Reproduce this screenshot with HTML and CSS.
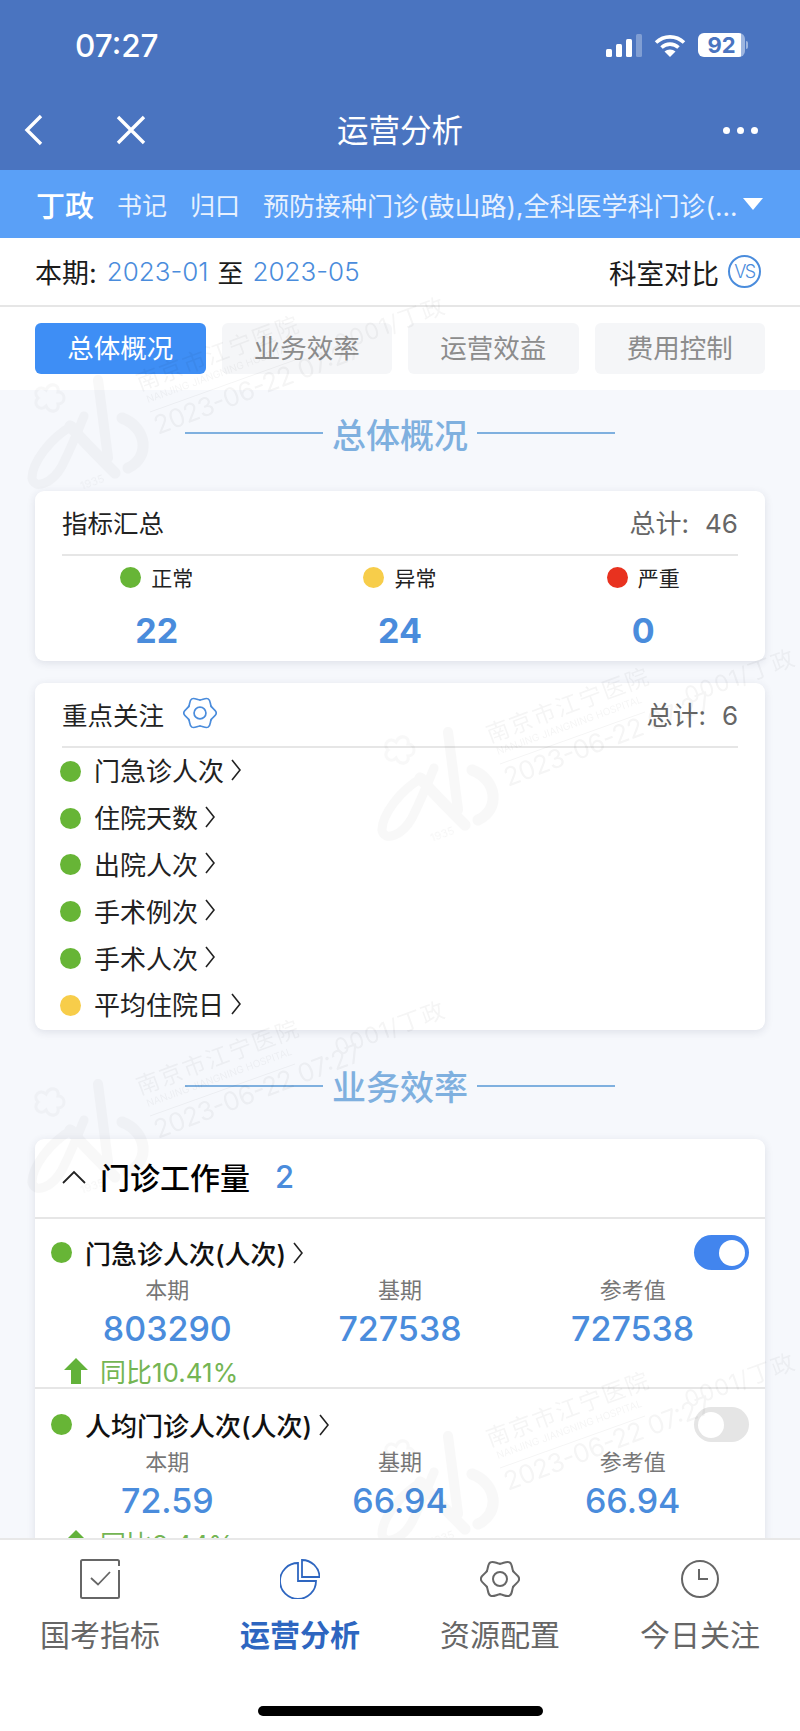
FILE: index.html
```html
<!DOCTYPE html>
<html>

    <head>
        <meta charset="utf-8">
        <link rel="stylesheet" href="styles.css">
    </head>

    <body>
        <!-- shared shapes -->
        <svg class="defs" width="0" height="0">
            <symbol id="gear" viewBox="0 0 40 40">
                <g fill="none" stroke="currentColor" stroke-width="2" stroke-linecap="round">
                    <path id="lobe" d="M33.25 12.35C34.75 14.95 39.2 16.5 39.2 20C39.2 23.5 34.75 25.05 33.25 27.65"/>
                    <use href="#lobe" transform="rotate(60 20 20)"/>
                    <use href="#lobe" transform="rotate(120 20 20)"/>
                    <use href="#lobe" transform="rotate(180 20 20)"/>
                    <use href="#lobe" transform="rotate(240 20 20)"/>
                    <use href="#lobe" transform="rotate(300 20 20)"/>
                    <circle cx="20" cy="20" r="7"/>
                </g>
            </symbol>
            <symbol id="chev" viewBox="0 0 10 22">
                <polyline points="1,1 9,11 1,21" fill="none" stroke="currentColor" stroke-width="1.6"/>
            </symbol>
            <symbol id="up" viewBox="0 0 24 26">
                <polygon points="12,0 24,12 17,12 17,26 7,26 7,12 0,12" fill="currentColor"/>
            </symbol>
            <symbol id="logo" viewBox="0 0 160 130">
                <g fill="none" stroke="#000" stroke-linecap="round">
                    <path d="M88 12L98 90" stroke-width="10"/>
                    <path d="M60 58C75 75 90 90 105 105" stroke-width="11"/>
                    <path d="M62 58C40 70 22 95 22 110C24 122 42 116 52 98C58 86 66 68 74 48" stroke-width="9"/>
                    <path d="M112 50C138 60 140 90 118 100" stroke-width="11"/>
                    <path d="M36 22C40 14 50 16 48 24C56 24 56 36 48 36C50 44 40 46 36 38C30 44 22 36 28 30C22 24 30 16 36 22Z" stroke-width="3"/>
                </g>
            </symbol>
        </svg>

        <div class="page">
            <header class="top">
                <div class="status">
                    <span class="time">07:27</span>
                    <div class="status-icons">
                        <svg class="signal" width="36" height="23" viewBox="0 0 36 23">
                            <rect x="0" y="15" width="6" height="8" rx="1.5" fill="#fff"/>
                            <rect x="10" y="10" width="6" height="13" rx="1.5" fill="#fff"/>
                            <rect x="20" y="5" width="6" height="18" rx="1.5" fill="#fff"/>
                            <rect x="30" y="0" width="6" height="23" rx="1.5" fill="#fff" opacity=".3"/>
                        </svg>
                        <svg class="wifi" width="32" height="23" viewBox="0 0 32 23">
                            <path d="M2 8.5C10 1 22 1 30 8.5M7.5 13.5C12.5 9 19.5 9 24.5 13.5" fill="none" stroke="#fff" stroke-width="3.6"/>
                            <path d="M16 23L10.5 17.5C13.5 14.8 18.5 14.8 21.5 17.5Z" fill="#fff"/>
                        </svg>
                        <div class="battery"><span class="battery-num">92</span></div>
                        <span class="battery-nub"></span>
                    </div>
                </div>
                <nav class="nav">
                    <svg class="nav-back" width="20" height="32" viewBox="0 0 20 32">
                        <polyline points="17,2 3,16 17,30" fill="none" stroke="#fff" stroke-width="3.4"/>
                    </svg>
                    <svg class="nav-close" width="30" height="30" viewBox="0 0 30 30">
                        <path d="M2 2L28 28M28 2L2 28" fill="none" stroke="#fff" stroke-width="3.4"/>
                    </svg>
                    <span class="nav-title">运营分析</span>
                    <div class="nav-more"><i></i><i></i><i></i></div>
                </nav>
            </header>

            <div class="user">
                <b class="user-name">丁政</b>
                <span class="user-role">书记</span>
                <span class="user-role">归口</span>
                <span class="user-dept">预防接种门诊(鼓山路),全科医学科门诊(...</span>
                <span class="user-caret"></span>
            </div>

            <div class="period">
                <span class="period-label">本期:</span>
                <span class="period-date">2023-01</span>
                <span>至</span>
                <span class="period-date">2023-05</span>
                <span class="period-cmp">科室对比</span>
                <span class="vs">VS</span>
            </div>

            <main class="main">
                <div class="tabs">
                    <div class="tab tab-on">总体概况</div>
                    <div class="tab">业务效率</div>
                    <div class="tab">运营效益</div>
                    <div class="tab">费用控制</div>
                </div>

                <div class="heading">
                    <i></i><span>总体概况</span><i></i>
                </div>

                <section class="card">
                    <div class="card-head">
                        <span class="card-title">指标汇总</span>
                        <span class="card-total">总计:<span class="total-num">46</span></span>
                    </div>
                    <div class="stats">
                        <div class="stat">
                            <div class="stat-label"><i class="dot green"></i>正常</div>
                            <div class="stat-num">22</div>
                        </div>
                        <div class="stat">
                            <div class="stat-label"><i class="dot yellow"></i>异常</div>
                            <div class="stat-num">24</div>
                        </div>
                        <div class="stat">
                            <div class="stat-label"><i class="dot red"></i>严重</div>
                            <div class="stat-num">0</div>
                        </div>
                    </div>
                </section>

                <section class="card card-focus">
                    <div class="card-head">
                        <span class="card-title">重点关注</span>
                        <svg class="focus-gear" width="34" height="34"><use href="#gear"/></svg>
                        <span class="card-total">总计:<span class="total-num">6</span></span>
                    </div>
                    <ul class="focus">
                        <li><i class="dot green"></i>门急诊人次<svg class="chev" width="10" height="22"><use href="#chev"/></svg></li>
                        <li><i class="dot green"></i>住院天数<svg class="chev" width="10" height="22"><use href="#chev"/></svg></li>
                        <li><i class="dot green"></i>出院人次<svg class="chev" width="10" height="22"><use href="#chev"/></svg></li>
                        <li><i class="dot green"></i>手术例次<svg class="chev" width="10" height="22"><use href="#chev"/></svg></li>
                        <li><i class="dot green"></i>手术人次<svg class="chev" width="10" height="22"><use href="#chev"/></svg></li>
                        <li><i class="dot yellow"></i>平均住院日<svg class="chev" width="10" height="22"><use href="#chev"/></svg></li>
                    </ul>
                </section>

                <div class="heading heading-next">
                    <i></i><span>业务效率</span><i></i>
                </div>

                <section class="card">
                    <div class="group-head">
                        <svg width="24" height="14" viewBox="0 0 24 14">
                            <polyline points="1,13 12,2 23,13" fill="none" stroke="#222" stroke-width="1.8"/>
                        </svg>
                        <span class="group-title">门诊工作量</span>
                        <span class="group-count">2</span>
                    </div>

                    <div class="item">
                        <div class="item-head">
                            <i class="dot green"></i>
                            <span class="item-name">门急诊人次(人次)</span>
                            <svg class="chev" width="10" height="22"><use href="#chev"/></svg>
                            <span class="switch switch-on"></span>
                        </div>
                        <div class="cols">
                            <div class="col"><div class="col-label">本期</div><div class="col-num">803290</div></div>
                            <div class="col"><div class="col-label">基期</div><div class="col-num">727538</div></div>
                            <div class="col"><div class="col-label">参考值</div><div class="col-num">727538</div></div>
                        </div>
                        <div class="yoy">
                            <svg width="24" height="26"><use href="#up"/></svg>
                            <span>同比10.41%</span>
                        </div>
                    </div>

                    <div class="item item-next">
                        <div class="item-head">
                            <i class="dot green"></i>
                            <span class="item-name">人均门诊人次(人次)</span>
                            <svg class="chev" width="10" height="22"><use href="#chev"/></svg>
                            <span class="switch"></span>
                        </div>
                        <div class="cols">
                            <div class="col"><div class="col-label">本期</div><div class="col-num">72.59</div></div>
                            <div class="col"><div class="col-label">基期</div><div class="col-num">66.94</div></div>
                            <div class="col"><div class="col-label">参考值</div><div class="col-num">66.94</div></div>
                        </div>
                        <div class="yoy">
                            <svg width="24" height="26"><use href="#up"/></svg>
                            <span>同比8.44%</span>
                        </div>
                    </div>
                </section>
            </main>

            <!-- watermark sits over the cards -->
            <svg class="mark mark-1" viewBox="0 -30 440 230">
                <use class="mark-logo" href="#logo" x="0" y="60" width="160" height="130"/>
                <g class="mark-text">
                    <text class="mark-cn" x="130" y="83" textLength="171" transform="rotate(-20.5 130 83)">南京市江宁医院</text>
                    <text class="mark-en" x="138" y="95" textLength="154" transform="rotate(-20 138 95)">NANJING JIANGNING HOSPITAL</text>
                    <line x1="140" y1="104" x2="285" y2="52" stroke="#000"/>
                    <text class="mark-date" x="148" y="127" textLength="220" transform="rotate(-21 148 127)">2023-06-22 07:27</text>
                    <text class="mark-cn" x="328" y="44" textLength="115" transform="rotate(-20 328 44)">0001/丁政</text>
                    <text class="mark-year" x="72" y="182" transform="rotate(-20 72 182)">1935</text>
                </g>
            </svg>
            <svg class="mark mark-2" viewBox="0 -30 440 230">
                <use class="mark-logo" href="#logo" x="0" y="60" width="160" height="130"/>
                <g class="mark-text">
                    <text class="mark-cn" x="130" y="83" textLength="171" transform="rotate(-20.5 130 83)">南京市江宁医院</text>
                    <text class="mark-en" x="138" y="95" textLength="154" transform="rotate(-20 138 95)">NANJING JIANGNING HOSPITAL</text>
                    <line x1="140" y1="104" x2="285" y2="52" stroke="#000"/>
                    <text class="mark-date" x="148" y="127" textLength="220" transform="rotate(-21 148 127)">2023-06-22 07:27</text>
                    <text class="mark-cn" x="328" y="44" textLength="115" transform="rotate(-20 328 44)">0001/丁政</text>
                    <text class="mark-year" x="72" y="182" transform="rotate(-20 72 182)">1935</text>
                </g>
            </svg>
            <svg class="mark mark-3" viewBox="0 -30 440 230">
                <use class="mark-logo" href="#logo" x="0" y="60" width="160" height="130"/>
                <g class="mark-text">
                    <text class="mark-cn" x="130" y="83" textLength="171" transform="rotate(-20.5 130 83)">南京市江宁医院</text>
                    <text class="mark-en" x="138" y="95" textLength="154" transform="rotate(-20 138 95)">NANJING JIANGNING HOSPITAL</text>
                    <line x1="140" y1="104" x2="285" y2="52" stroke="#000"/>
                    <text class="mark-date" x="148" y="127" textLength="220" transform="rotate(-21 148 127)">2023-06-22 07:27</text>
                    <text class="mark-cn" x="328" y="44" textLength="115" transform="rotate(-20 328 44)">0001/丁政</text>
                    <text class="mark-year" x="72" y="182" transform="rotate(-20 72 182)">1935</text>
                </g>
            </svg>
            <svg class="mark mark-4" viewBox="0 -30 440 230">
                <use class="mark-logo" href="#logo" x="0" y="60" width="160" height="130"/>
                <g class="mark-text">
                    <text class="mark-cn" x="130" y="83" textLength="171" transform="rotate(-20.5 130 83)">南京市江宁医院</text>
                    <text class="mark-en" x="138" y="95" textLength="154" transform="rotate(-20 138 95)">NANJING JIANGNING HOSPITAL</text>
                    <line x1="140" y1="104" x2="285" y2="52" stroke="#000"/>
                    <text class="mark-date" x="148" y="127" textLength="220" transform="rotate(-21 148 127)">2023-06-22 07:27</text>
                    <text class="mark-cn" x="328" y="44" textLength="115" transform="rotate(-20 328 44)">0001/丁政</text>
                    <text class="mark-year" x="72" y="182" transform="rotate(-20 72 182)">1935</text>
                </g>
            </svg>

            <footer class="bar">
                <div class="bar-items">
                    <div class="bar-item">
                        <svg width="40" height="40" viewBox="0 0 40 40">
                            <path d="M39 7V2.500A1.500 1.500 0 0 0 37.500 1H2.500A1.500 1.500 0 0 0 1 2.500V37.500A1.500 1.500 0 0 0 2.500 39H37.500A1.500 1.500 0 0 0 39 37.500V11" fill="none" stroke="currentColor" stroke-width="2"/>
                            <polyline points="11,19 18,25.500 30,13" fill="none" stroke="currentColor" stroke-width="1.800"/>
                        </svg>
                        <span>国考指标</span>
                    </div>
                    <div class="bar-item bar-on">
                        <svg width="40" height="40" viewBox="0 0 40 40">
                            <path d="M18 4A18 18 0 1 0 36 22H18Z" fill="none" stroke="currentColor" stroke-width="1.800"/>
                            <path d="M22 1A17.500 17.500 0 0 1 39.500 18H22Z" fill="none" stroke="currentColor" stroke-width="1.800"/>
                        </svg>
                        <span>运营分析</span>
                    </div>
                    <div class="bar-item">
                        <svg width="40" height="40"><use href="#gear"/></svg>
                        <span>资源配置</span>
                    </div>
                    <div class="bar-item">
                        <svg width="40" height="40" viewBox="0 0 40 40">
                            <circle cx="20" cy="20" r="18" fill="none" stroke="currentColor" stroke-width="2"/>
                            <polyline points="19,10 19,20 28,20" fill="none" stroke="currentColor" stroke-width="2"/>
                        </svg>
                        <span>今日关注</span>
                    </div>
                </div>
                <div class="home"></div>
            </footer>
        </div>
    </body>

</html>
```

FILE: styles.css
```css
html,
body {
    margin: 0;
    height: 100%;
}

body {
    font-family: "Inter", "Noto Sans CJK SC", sans-serif;
    color: #222;
    background: #fff;
}

i {
    display: block;
    font-style: normal;
}

.defs {
    position: absolute;
}

.page {
    width: 800px;
    height: 1731px;
    position: relative;
    display: flex;
    flex-direction: column;
    overflow: hidden;
}

/* blue header */
.top {
    height: 170px;
    background: #4a74c0;
    color: #fff;
}

.status {
    height: 90px;
    display: flex;
    align-items: center;
    justify-content: space-between;
    padding: 0 52px 0 75px;
}

.time {
    font-size: 31.5px;
    font-weight: 500;
}

.status-icons {
    display: flex;
    align-items: center;
}

.signal {
    margin-right: 12px;
}

.wifi {
    margin-right: 12px;
}

.battery {
    width: 47px;
    height: 24px;
    border-radius: 6px;
    background: linear-gradient(90deg, #fff 92%, #9db5df 92%);
    color: #4a74c0;
    display: flex;
    align-items: center;
    justify-content: center;
}

.battery-num {
    font-size: 22px;
    font-weight: 700;
}

.battery-nub {
    width: 2px;
    height: 8px;
    margin-left: 1px;
    border-radius: 0 2px 2px 0;
    background: #9db5df;
}

.nav {
    height: 80px;
    display: flex;
    align-items: center;
    padding: 0 42px 0 24px;
}

.nav-close {
    margin-left: 72px;
}

.nav-title {
    flex: 1;
    margin: 0 69px 5px 0;
    text-align: center;
    font-size: 31.5px;
}

.nav-more {
    display: flex;
    gap: 7px;
}

.nav-more i {
    width: 7px;
    height: 7px;
    border-radius: 50%;
    background: #fff;
}

/* user band */
.user {
    height: 68px;
    background: #5aa0f7;
    color: #e8f1fe;
    display: flex;
    align-items: center;
    padding: 0 37px 0 36px;
    font-size: 25px;
}

.user-name {
    font-size: 29px;
    font-weight: 500;
    color: #fff;
    margin-right: 23px;
}

.user-role {
    margin-right: 23px;
}

.user-dept {
    flex: 1;
    font-size: 26px;
    white-space: nowrap;
}

.user-caret {
    width: 0;
    height: 0;
    border-left: 10px solid transparent;
    border-right: 10px solid transparent;
    border-top: 12px solid #fff;
}

/* period row */
.period {
    height: 67px;
    border-bottom: 2px solid #e6e6e6;
    display: flex;
    align-items: center;
    gap: 9px;
    padding: 0 39px 0 35px;
    font-size: 26px;
    color: #1c1c1c;
}

.period-label {
    margin-right: 1px;
    font-size: 27px;
}

.period-date {
    color: #4a8cdc;
    font-weight: 300;
}

.period-cmp {
    margin-left: auto;
    font-size: 27.5px;
}

.vs {
    width: 29px;
    height: 29px;
    border: 2px solid #4a8cdc;
    border-radius: 50%;
    color: #4a8cdc;
    font-size: 18px;
    font-weight: 300;
    letter-spacing: -1.5px;
    text-align: center;
    line-height: 29px;
}

/* scrolling area */
.main {
    flex: 1;
    overflow: hidden;
    background: #f6f8fc;
}

.tabs {
    display: grid;
    grid-template-columns: repeat(4, 1fr);
    gap: 16px;
    padding: 16px 35px;
    background: #fff;
}

.tab {
    height: 51px;
    line-height: 51px;
    text-align: center;
    border-radius: 6px;
    font-size: 26.5px;
    background: #f5f6f8;
    color: #8c8c8c;
}

.tab-on {
    background: #3e8ef5;
    color: #fff;
}

.heading {
    display: flex;
    align-items: center;
    justify-content: center;
    gap: 9px;
    height: 44px;
    margin: 21px 0 36px;
    font-size: 34px;
    font-weight: 500;
    color: #7fb0df;
}

.heading-next {
    margin: 34px 0 31px;
}

.heading i {
    width: 138px;
    height: 2px;
    background: #7fb0df;
}

.card {
    margin: 0 35px;
    background: #fff;
    border-radius: 9px;
    box-shadow: 0 2px 8px rgba(40, 50, 80, .12);
}

.card-focus {
    margin-top: 22px;
}

.card-head {
    height: 60px;
    padding-bottom: 3px;
    margin: 0 27px;
    border-bottom: 2px solid #e6e6e6;
    display: flex;
    align-items: center;
}

.card-title {
    font-size: 25.5px;
    color: #222;
}

.card-total {
    margin-left: auto;
    font-size: 26px;
    color: #666;
}

.total-num {
    margin-left: 16px;
}

.focus-gear {
    margin-left: 19px;
    color: #4a8cdc;
}

.dot {
    width: 21px;
    height: 21px;
    border-radius: 50%;
    flex: none;
}

.green {
    background: #67b536;
}

.yellow {
    background: #f7cd4a;
}

.red {
    background: #e8321f;
}

.stats {
    display: grid;
    grid-template-columns: repeat(3, 1fr);
    padding: 6px 0 10px;
}

.stat {
    text-align: center;
}

.stat-label {
    height: 30px;
    display: flex;
    align-items: center;
    justify-content: center;
    gap: 10px;
    font-size: 21px;
}

.stat-num {
    height: 40px;
    line-height: 40px;
    margin-top: 19px;
    font-size: 34px;
    font-weight: 700;
    color: #4a8cdc;
}

.focus {
    list-style: none;
    margin: 0;
    padding: 0 0 1px 25px;
}

.focus li {
    height: 46.8px;
    box-sizing: border-box;
    padding-bottom: 3px;
    display: flex;
    align-items: center;
    font-size: 26px;
}

.focus .dot {
    margin: 3px 13px 0 0;
}

.chev {
    margin-left: 7px;
    color: #222;
    flex: none;
}

.group-head {
    height: 76px;
    padding: 0 0 2px 27px;
    border-bottom: 2px solid #e6e6e6;
    display: flex;
    align-items: center;
}

.group-title {
    margin: 0 0 2px 14px;
    font-size: 30px;
    font-weight: 500;
    color: #000;
}

.group-count {
    margin-left: 25px;
    font-size: 31px;
    font-weight: 500;
    color: #4a8cdc;
}

.item {
    box-sizing: border-box;
    height: 170px;
    padding: 16px 16px 0;
    border-bottom: 2px solid #e6e6e6;
}

.item-next {
    padding-top: 18px;
}

.item-head {
    height: 36px;
    display: flex;
    align-items: center;
}

.item-name {
    margin-left: 13px;
    font-size: 26px;
    font-weight: 500;
    color: #111;
}

.switch {
    width: 55px;
    height: 35px;
    margin-left: auto;
    border-radius: 18px;
    background: #e5e5e5;
    display: flex;
    align-items: center;
    padding: 0 4px;
    box-sizing: border-box;
}

.switch::after {
    content: "";
    width: 26px;
    height: 26px;
    border-radius: 50%;
    background: #fff;
}

.switch-on {
    background: #4285ee;
    justify-content: flex-end;
}

.cols {
    display: grid;
    grid-template-columns: repeat(3, 1fr);
    margin-top: 4px;
    text-align: center;
}

.col-label {
    height: 30px;
    line-height: 30px;
    font-size: 22px;
    color: #777;
}

.col-num {
    height: 40px;
    line-height: 40px;
    margin-top: 4px;
    font-size: 34px;
    font-weight: 500;
    color: #4a8cdc;
}

.yoy {
    height: 30px;
    margin: 7px 0 0 13px;
    display: flex;
    align-items: center;
    gap: 12px;
    font-size: 26px;
    color: #74b553;
}

.yoy svg {
    color: #62b23a;
}

/* bottom bar */
.bar {
    height: 193px;
    box-sizing: border-box;
    border-top: 2px solid #e8e8e8;
    background: #fff;
    position: relative;
    z-index: 2;
}

.bar-items {
    display: grid;
    grid-template-columns: repeat(4, 1fr);
    padding-top: 19px;
}

.bar-item {
    display: flex;
    flex-direction: column;
    align-items: center;
    color: #666;
}

.bar-item span {
    margin-top: 14px;
    height: 44px;
    line-height: 44px;
    font-size: 30px;
}

.bar-on {
    color: #2e66c0;
}

.bar-on span {
    font-weight: 700;
}

.home {
    width: 285px;
    height: 10px;
    margin: 49px auto 0;
    border-radius: 5px;
    background: #000;
}

/* watermark tiles */
.mark {
    position: absolute;
    width: 440px;
    height: 230px;
    pointer-events: none;
}

.mark-1 {
    left: 10px;
    top: 278px;
}

.mark-2 {
    left: 360px;
    top: 630px;
}

.mark-3 {
    left: 10px;
    top: 982px;
}

.mark-4 {
    left: 360px;
    top: 1334px;
}

.mark-logo {
    opacity: .025;
}

.mark-text {
    opacity: .04;
}

.mark-cn {
    font-size: 23px;
}

.mark-en {
    font-size: 10px;
}

.mark-date {
    font-size: 26px;
}

.mark-year {
    font-size: 11px;
}
```
